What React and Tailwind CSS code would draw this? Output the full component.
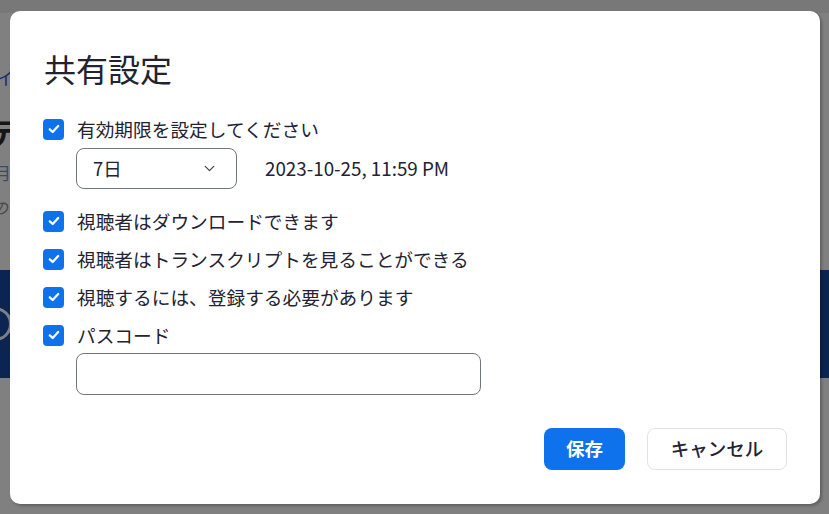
import { ChevronDown } from 'lucide-react';

const font = { fontFamily: '"Noto Sans CJK JP", "Noto Sans", sans-serif' };

function Check({ label }) {
  return (
    <label className="flex items-center gap-[13px] h-[30px] text-[18.7px] text-[#232333]">
      <span className="w-[21px] h-[21px] rounded-[4px] bg-[#0e72ed] flex items-center justify-center shrink-0">
        <svg viewBox="0 0 16 16" className="w-[14px] h-[14px]" fill="none">
          <path d="M3.2 8.4 6.5 11.4 12.8 4.6" stroke="white" strokeWidth="2.6" strokeLinecap="round" strokeLinejoin="round" />
        </svg>
      </span>
      {label}
    </label>
  );
}

export default function App() {
  return (
    <div className="relative w-[829px] h-[514px] overflow-hidden bg-[#808080]" style={font}>
      {/* page behind the dimmed overlay */}
      <div className="h-[13px] bg-[#787878]" />
      <div className="flex flex-col">
        <div className="mt-[52px] text-[18px] leading-[24px] text-[#15306e] -ml-[4px]">イ</div>
        <div className="mt-[24px] text-[30px] font-bold leading-[36px] text-[#161616] -ml-[12px]">テ</div>
        <div className="mt-[12px] text-[17px] leading-[24px] text-[#3c4a66] -ml-[6px]">月</div>
        <div className="mt-[10px] text-[16px] leading-[24px] italic text-[#4a4a4a] -ml-[8px]">の</div>
        <div className="mt-[51px] h-[108px] bg-[#0b2451] flex items-center">
          <span className="w-[34px] h-[34px] rounded-full border-[3px] border-[#7b7f86] -ml-[22px]" />
        </div>
      </div>

      {/* modal */}
      <div className="absolute left-[10px] top-[11px] w-[810px] h-[493px] bg-white rounded-[10px] shadow-[2px_2px_3px_rgba(0,0,0,0.25)] px-[33px] pt-[37px]">
        <h1 className="text-[32px] leading-[40px] text-[#222230] font-normal ml-[1px]">共有設定</h1>

        <div className="mt-[26px]">
          <Check label="有効期限を設定してください" />
          <div className="mt-[4px] ml-[33px] flex items-center gap-[28px]">
            <div className="w-[161px] h-[41px] rounded-[8px] border border-[#6e7781] flex items-center justify-between pl-[16px] pr-[18px] text-[18.5px] text-[#232333]">
              <span>7日</span>
              <ChevronDown className="w-[17px] h-[17px] text-[#444]" strokeWidth={1.8} />
            </div>
            <span className="text-[18.8px] text-[#232333]">2023-10-25, 11:59 PM</span>
          </div>
        </div>

        <div className="mt-[17px] flex flex-col gap-[8px]">
          <Check label="視聴者はダウンロードできます" />
          <Check label="視聴者はトランスクリプトを見ることができる" />
          <Check label="視聴するには、登録する必要があります" />
          <div>
            <Check label="パスコード" />
            <div className="mt-[3px] ml-[33px] w-[405px] h-[42px] rounded-[8px] border border-[#6e7781]" />
          </div>
        </div>

        <div className="mt-[33px] flex justify-end gap-[22px]">
          <button className="w-[81px] h-[42px] rounded-[8px] bg-[#0e72ed] text-white text-[18.5px] font-bold">保存</button>
          <button className="w-[140px] h-[42px] rounded-[8px] border border-[#dfe3e8] bg-white text-[#232333] text-[18.5px] font-medium">キャンセル</button>
        </div>
      </div>
    </div>
  );
}
